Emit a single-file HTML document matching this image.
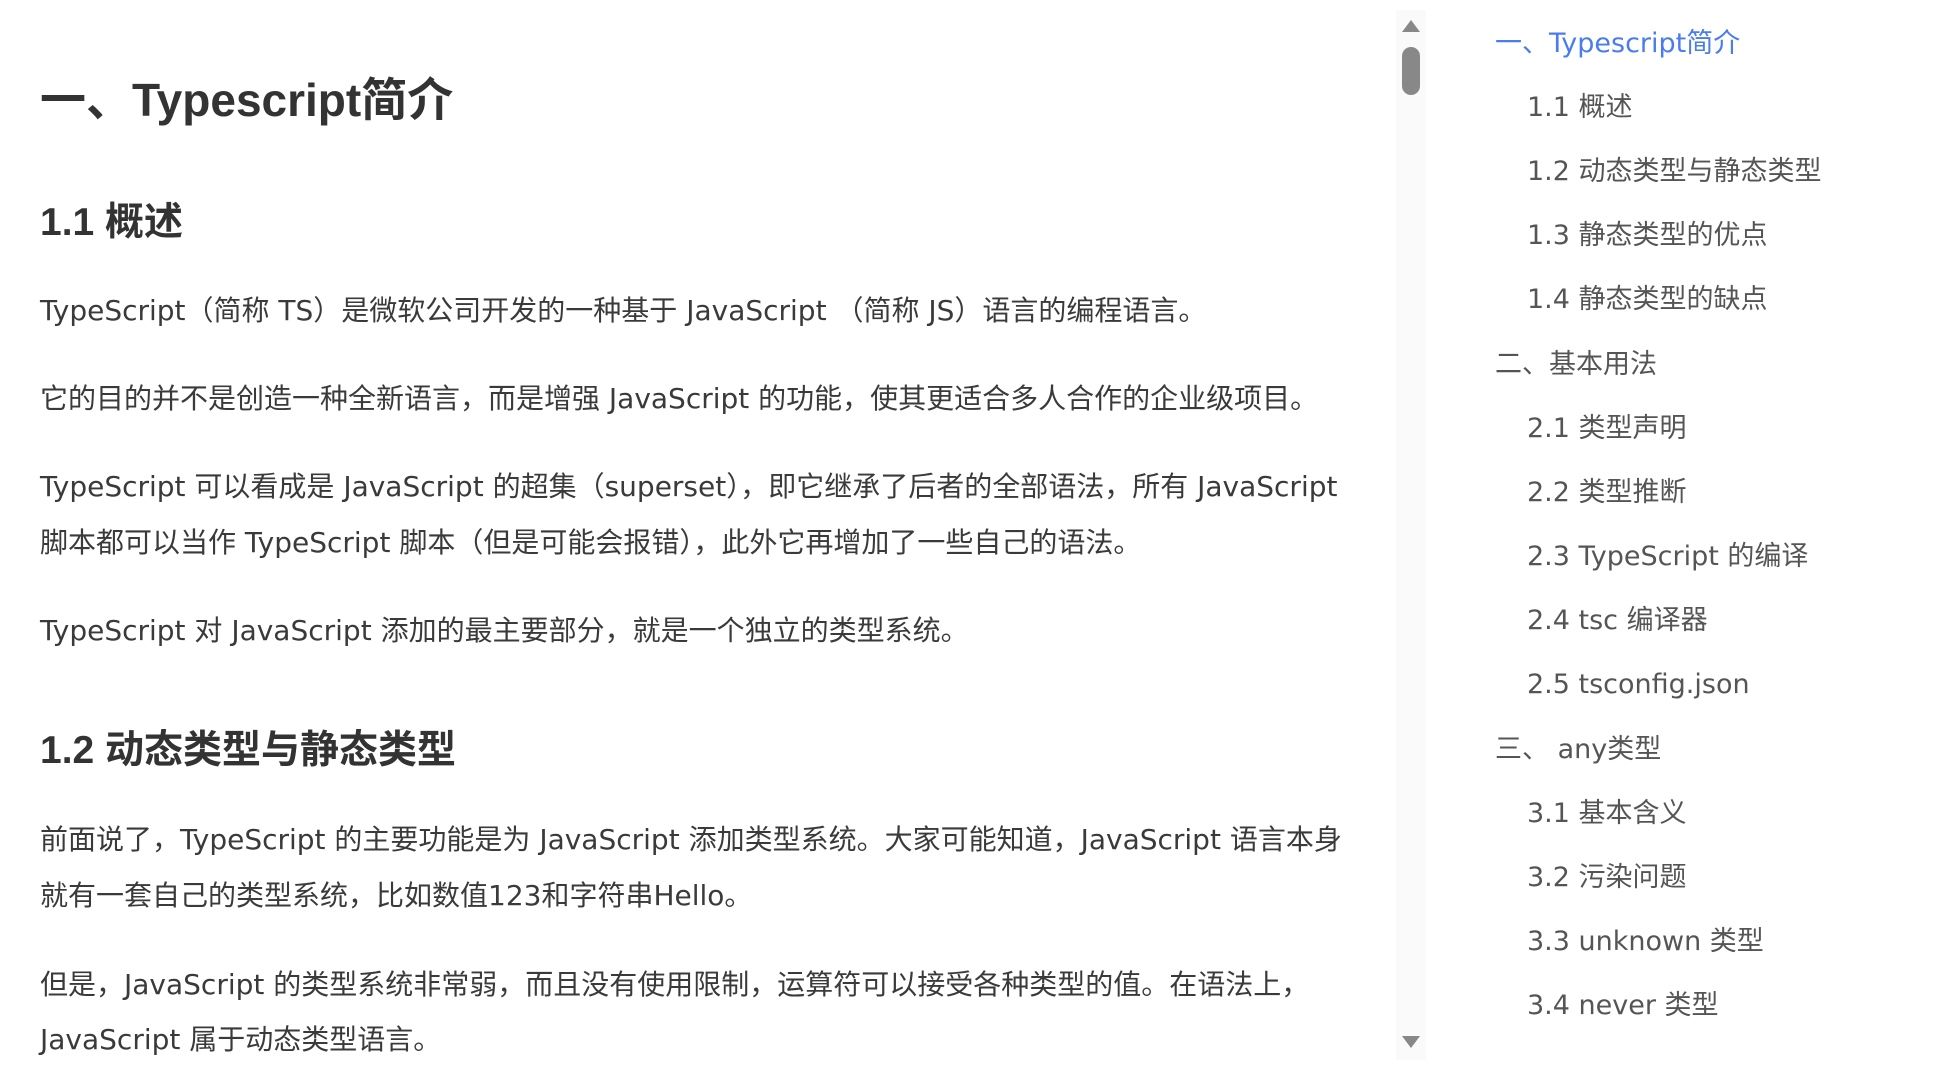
<!DOCTYPE html>
<html><head><meta charset="utf-8"><style>
html,body{margin:0;padding:0;background:#fff;width:1951px;height:1088px;overflow:hidden;}
body{font-family:"Liberation Sans","Noto Sans CJK SC",sans-serif;position:relative;}
.t{position:absolute;white-space:nowrap;line-height:40px;}
.h1{font-size:46px;font-weight:bold;color:#333;line-height:60px;}
.h2{font-size:39px;font-weight:bold;color:#333;line-height:50px;}
.p{font-size:28px;color:#3a3a3a;left:40px;font-family:"DejaVu Sans","Noto Sans CJK SC",sans-serif;}
.toc{font-size:27px;color:#555;font-family:"DejaVu Sans","Noto Sans CJK SC",sans-serif;}
.l1{left:1495px}.l2{left:1527px}
</style></head><body>
<div class="t h1" style="left:40px;top:70px">一、Typescript简介</div>
<div class="t h2" style="left:40px;top:198px">1.1 概述</div>
<div class="t p" style="top:291px">TypeScript（简称 TS）是微软公司开发的一种基于 JavaScript （简称 JS）语言的编程语言。</div>
<div class="t p" style="top:379px">它的目的并不是创造一种全新语言，而是增强 JavaScript 的功能，使其更适合多人合作的企业级项目。</div>
<div class="t p" style="top:467px">TypeScript 可以看成是 JavaScript 的超集（superset），即它继承了后者的全部语法，所有 JavaScript</div>
<div class="t p" style="top:523px">脚本都可以当作 TypeScript 脚本（但是可能会报错），此外它再增加了一些自己的语法。</div>
<div class="t p" style="top:611px">TypeScript 对 JavaScript 添加的最主要部分，就是一个独立的类型系统。</div>
<div class="t h2" style="left:40px;top:726px">1.2 动态类型与静态类型</div>
<div class="t p" style="top:820px">前面说了，TypeScript 的主要功能是为 JavaScript 添加类型系统。大家可能知道，JavaScript 语言本身</div>
<div class="t p" style="top:876px">就有一套自己的类型系统，比如数值123和字符串Hello。</div>
<div class="t p" style="top:965px">但是，JavaScript 的类型系统非常弱，而且没有使用限制，运算符可以接受各种类型的值。在语法上，</div>
<div class="t p" style="top:1020px">JavaScript 属于动态类型语言。</div>

<div style="position:absolute;left:1396px;top:10px;width:30px;height:1050px;background:#fafafa"></div>
<div style="position:absolute;left:1402px;top:20px;width:0;height:0;border-left:9px solid transparent;border-right:9px solid transparent;border-bottom:12px solid #888"></div>
<div style="position:absolute;left:1402px;top:47px;width:18px;height:48px;border-radius:9px;background:#888"></div>
<div style="position:absolute;left:1402px;top:1036px;width:0;height:0;border-left:9px solid transparent;border-right:9px solid transparent;border-top:12px solid #888"></div>

<div class="t toc l1" style="top:24px;color:#4a7cf0">一、Typescript简介</div>
<div class="t toc l2" style="top:88px">1.1 概述</div>
<div class="t toc l2" style="top:152px">1.2 动态类型与静态类型</div>
<div class="t toc l2" style="top:216px">1.3 静态类型的优点</div>
<div class="t toc l2" style="top:280px">1.4 静态类型的缺点</div>
<div class="t toc l1" style="top:345px">二、基本用法</div>
<div class="t toc l2" style="top:409px">2.1 类型声明</div>
<div class="t toc l2" style="top:473px">2.2 类型推断</div>
<div class="t toc l2" style="top:537px">2.3 TypeScript 的编译</div>
<div class="t toc l2" style="top:601px">2.4 tsc 编译器</div>
<div class="t toc l2" style="top:665px">2.5 tsconfig.json</div>
<div class="t toc l1" style="top:730px">三、 any类型</div>
<div class="t toc l2" style="top:794px">3.1 基本含义</div>
<div class="t toc l2" style="top:858px">3.2 污染问题</div>
<div class="t toc l2" style="top:922px">3.3 unknown 类型</div>
<div class="t toc l2" style="top:986px">3.4 never 类型</div>
</body></html>
